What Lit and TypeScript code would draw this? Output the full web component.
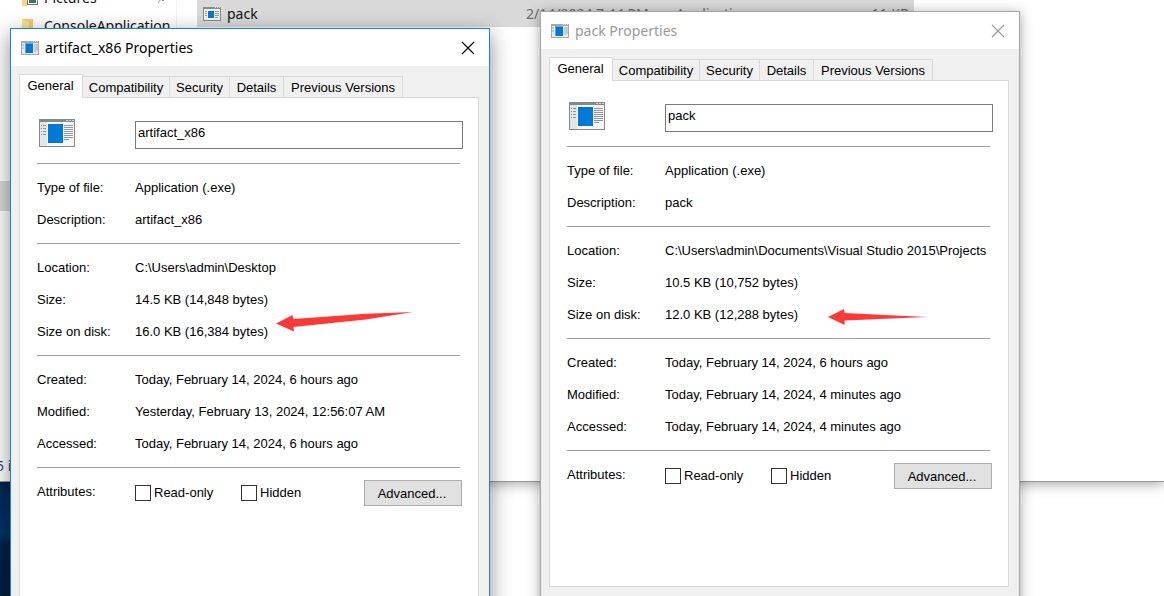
import { LitElement, html, css, svg } from "lit";
import { customElement, property } from "lit/decorators.js";

interface Row { label: string; value: string; }
interface FileInfo { name: string; groups: Row[][]; }

const leftFile: FileInfo = {
  name: "artifact_x86",
  groups: [
    [{ label: "Type of file:", value: "Application (.exe)" }, { label: "Description:", value: "artifact_x86" }],
    [{ label: "Location:", value: "C:\\Users\\admin\\Desktop" }, { label: "Size:", value: "14.5 KB (14,848 bytes)" }, { label: "Size on disk:", value: "16.0 KB (16,384 bytes)" }],
    [{ label: "Created:", value: "Today, February 14, 2024, 6 hours ago" }, { label: "Modified:", value: "Yesterday, February 13, 2024, 12:56:07 AM" }, { label: "Accessed:", value: "Today, February 14, 2024, 6 hours ago" }],
  ],
};
const rightFile: FileInfo = {
  name: "pack",
  groups: [
    [{ label: "Type of file:", value: "Application (.exe)" }, { label: "Description:", value: "pack" }],
    [{ label: "Location:", value: "C:\\Users\\admin\\Documents\\Visual Studio 2015\\Projects" }, { label: "Size:", value: "10.5 KB (10,752 bytes)" }, { label: "Size on disk:", value: "12.0 KB (12,288 bytes)" }],
    [{ label: "Created:", value: "Today, February 14, 2024, 6 hours ago" }, { label: "Modified:", value: "Today, February 14, 2024, 4 minutes ago" }, { label: "Accessed:", value: "Today, February 14, 2024, 4 minutes ago" }],
  ],
};

const smallIcon = html`<svg width="18" height="14" viewBox="0 0 18 14" shape-rendering="crispEdges" aria-hidden="true">
  <rect width="18" height="14" fill="#a4a9ac"/><rect x="1" y="2" width="16" height="11" fill="#e6e8e9"/>
  <rect x="12" y="0" width="1" height="1" fill="#ddd"/><rect x="14" y="0" width="1" height="1" fill="#ddd"/><rect x="16" y="0" width="1" height="1" fill="#ddd"/>
  <rect x="1" y="3" width="2" height="2" fill="#c4c8ca"/><rect x="1" y="6" width="2" height="2" fill="#c4c8ca"/>
  <rect x="4" y="2" width="8" height="10" fill="#5aa6e6"/><rect x="5" y="3" width="7" height="9" fill="#0078d7"/><path d="M13 3h4v7h-2v1h-2z" fill="#c8c9cb"/></svg>`;

const listIcon = html`<svg width="18" height="14" viewBox="0 0 18 14" shape-rendering="crispEdges" aria-hidden="true">
  <rect width="18" height="14" fill="#868b8e"/><rect x="1" y="2" width="16" height="11" fill="#f3f3f3"/>
  <rect x="12" y="0" width="1" height="1" fill="#ddd"/><rect x="14" y="0" width="1" height="1" fill="#ddd"/><rect x="16" y="0" width="1" height="1" fill="#ddd"/>
  <path d="M2 4h2v1H2zM2 6h2v1H2zM2 8h2v1H2zM12 4h4v1h-4zM12 6h4v1h-4zM12 8h4v1h-4zM12 10h3v1h-3z" fill="#9a9da0"/>
  <rect x="5" y="4" width="6" height="7" fill="#0878d8"/></svg>`;

const largeIcon = html`<svg width="36" height="28" viewBox="0 0 36 28" shape-rendering="crispEdges" aria-hidden="true">
  <rect width="36" height="28" fill="#84888b"/><rect x="1" y="3" width="34" height="24" fill="#f7f7f7"/><rect x="1" y="3" width="7" height="24" fill="#e3e5e6"/>
  <path d="M27 1h2v1h-2zM30 1h2v1h-2zM33 1h2v1h-2z" fill="#d7dadb"/>
  ${[6, 9, 12, 15].map((y) => svg`<path d=${`M2 ${y}h1v1H2zM4 ${y}h3v1H4z`} fill="#8f9497"/>`)}
  <rect x="9" y="5" width="15" height="19" fill="#0078d7"/>
  ${[6, 8, 10, 12, 14, 16, 18].map((y) => svg`<rect x="25" y=${y} width="9" height="1" fill="#929699"/>`)}
  <rect x="25" y="20" width="5" height="1" fill="#929699"/></svg>`;

@customElement("properties-dialog")
export class PropertiesDialog extends LitElement {
  @property({ attribute: false }) file!: FileInfo;
  @property({ type: Boolean, reflect: true }) active = false;

  static styles = css`
    :host { display: block; box-sizing: border-box; width: 480px; background: #f0f0f0; border: 1px solid #a3a3a3; box-shadow: 0 2px 12px rgba(0,0,0,.36); color: #000; font: 13px/16px "Liberation Sans", sans-serif; padding-bottom: 48px; }
    :host([active]) { border-color: #1883d7; box-shadow: 0 6px 20px rgba(0,0,0,.45); }
    * { box-sizing: border-box; }
    svg { display: block; flex: none; }
    .title { display: flex; align-items: center; gap: 6px; height: 37px; padding: 0 14px 0 10px; background: #fff; color: #999; }
    :host([active]) .title { color: #000; }
    h2 { flex: 1; margin: 0; font: 14px/20px "Noto Sans", sans-serif; }
    button { font: inherit; color: inherit; }
    .close { border: 0; padding: 0; background: none; }
    .tabs { display: flex; align-items: flex-end; padding: 8px 8px 0; }
    .tab { height: 21px; padding: 2px 3px 0; border: 1px solid #d9d9d9; border-width: 1px 1px 0 0; background: #f0f0f0; white-space: nowrap; text-align: center; }
    .tab.compat { width: 87px; } .tab.security { width: 60px; } .tab.details { width: 54px; } .tab.versions { width: 119px; }
    .tab.general { width: 64px; height: 24px; margin-bottom: -1px; padding: 0 4px 2px 3px; border-left-width: 1px; background: #fff; position: relative; }
    .panel { margin: 0 10px 0 8px; min-height: 507px; padding: 21px 15px 0 17px; border: 1px solid #d9d9d9; background: #fff; }
    .head { display: flex; align-items: flex-start; padding: 0 0 14px 2px; }
    .head input { flex: 1; min-width: 0; height: 28px; margin: 2px 0 0 60px; padding: 0 2px 5px; border: 1px solid #7a7a7a; border-radius: 0; background: #fff; font: inherit; color: inherit; outline: 0; }
    hr { height: 1px; margin: 0 3px 0 0; border: 0; background: #a0a0a0; }
    dl { margin: 0; padding: 8px 0 7px; }
    .row { display: flex; align-items: center; height: 32px; }
    dt { width: 98px; flex: none; }
    dd { flex: 1; min-width: 0; margin: 0; overflow: hidden; white-space: nowrap; }
    .attributes { display: flex; align-items: flex-start; padding: 12px 1px 0 0; }
    .caption { width: 98px; padding-top: 4px; }
    .check { display: flex; align-items: center; gap: 3px; width: 106px; height: 26px; }
    .check input { appearance: none; width: 16px; height: 16px; margin: 0; border: 1px solid #333; background: #fff; }
    .advanced { width: 98px; height: 26px; margin-left: auto; padding: 2px 2px 0 0; border: 1px solid #adadad; background: #e1e1e1; }
  `;

  render() {
    return html`
      <header class="title">${smallIcon}<h2>${this.file.name} Properties</h2>
        <button class="close" aria-label="Close"><svg width="14" height="14" viewBox="0 0 14 14"><path d="M1 1l12 12M13 1L1 13" stroke="currentColor" stroke-width="1.1"/></svg></button>
      </header>
      <div class="tabs" role="tablist">
        <button class="tab general" role="tab" aria-selected="true">General</button>
        <button class="tab compat" role="tab">Compatibility</button>
        <button class="tab security" role="tab">Security</button>
        <button class="tab details" role="tab">Details</button>
        <button class="tab versions" role="tab">Previous Versions</button>
      </div>
      <div class="panel" role="tabpanel">
        <div class="head">${largeIcon}<input type="text" aria-label="File name" .value=${this.file.name} /></div>
        ${this.file.groups.map((g) => html`<hr /><dl>${g.map((r) => html`<div class="row"><dt>${r.label}</dt><dd>${r.value}</dd></div>`)}</dl>`)}
        <hr />
        <div class="attributes"><span class="caption">Attributes:</span>
          <label class="check"><input type="checkbox" />Read-only</label>
          <label class="check"><input type="checkbox" />Hidden</label>
          <button class="advanced">Advanced...</button>
        </div>
      </div>`;
  }
}

@customElement("app-root")
export class AppRoot extends LitElement {
  static styles = css`
    :host { display: block; position: relative; height: 100vh; overflow: hidden; background: #fff; font: 14px/20px "Noto Sans", sans-serif; color: #111; }
    * { box-sizing: border-box; }
    svg { display: block; flex: none; }
    .explorer { display: flex; flex-direction: column; height: 482px; border-bottom: 1px solid #999; background: #fff; box-shadow: 0 2px 12px rgba(0,0,0,.36); position: relative; }
    .columns { display: flex; flex: 1; min-height: 0; overflow: hidden; }
    .nav { display: flex; flex-direction: column; width: 177px; border-right: 1px solid #f3f3f3; }
    .item { display: flex; align-items: center; gap: 5px; height: 28px; padding-left: 21px; flex: none; }
    .item:first-child { margin-top: -16px; }
    .item .pin { margin-left: auto; margin-right: 9px; }
    .selected { height: 30px; margin-top: 141px; background: #d9d9d9; }
    .files { flex: 1; padding-left: 20px; }
    .file { display: grid; grid-template-columns: 323px 150px 1fr 80px; width: 717px; height: 27px; padding: 0 5px 0 6px; align-items: center; background: #d9d9d9; color: #6d6d6d; }
    .name { display: flex; align-items: center; gap: 6px; color: #111; }
    .size { text-align: right; }
    .status { height: 30px; line-height: 30px; color: #26456e; text-indent: -4px; }
    .wallpaper { width: 10px; height: 114px; background: linear-gradient(#002a55, #003468 45%, #002248 55%, #001f42); }
    .left, .right { position: absolute; }
    .left { left: 10px; top: 28px; }
    .right { left: 540px; top: 11px; }
    .arrow { position: absolute; }
    .first { left: 276px; top: 311px; }
    .second { left: 828px; top: 308px; }
  `;

  render() {
    return html`
      <section class="explorer">
        <div class="columns">
          <nav class="nav">
            <div class="item"><svg width="18" height="18" viewBox="0 0 18 18"><path d="M1 2h6v15H1z" fill="#f7d681"/><rect x="6.500" y="4.500" width="10" height="11" fill="#fff" stroke="#777"/><path d="M8 14V9l3-3 4 4v4z" fill="#3c6f7b"/></svg><span>Pictures</span>
              <svg class="pin" width="10" height="12" viewBox="0 0 10 12"><path d="M1 11l3-4M2 5l5 4M5 1l4 4-3 4-4-4z" fill="none" stroke="#8a949c"/></svg></div>
            <div class="item"><svg width="18" height="18" viewBox="0 0 18 18"><path d="M1 2h11v15H1z" fill="#f3cc6a"/><path d="M1 2l7 3v13l-7-2z" fill="#fbe095"/></svg><span>ConsoleApplication</span></div>
            <div class="selected"></div>
          </nav>
          <div class="files">
            <div class="file"><span class="name">${listIcon}pack</span><span>2/14/2024 7:44 PM</span><span>Application</span><span class="size">11 KB</span></div>
          </div>
        </div>
        <div class="status">5 items</div>
      </section>
      <div class="wallpaper"></div>
      <properties-dialog class="left" active .file=${leftFile}></properties-dialog>
      <properties-dialog class="right" .file=${rightFile}></properties-dialog>
      <svg class="arrow first" width="138" height="22" viewBox="0 0 138 22" aria-hidden="true"><path d="M0 12.5L16.5 4l.8 4L90 2.800 137 1 90 8.500 17.500 16l.5 4.500z" fill="#fb3a38"/></svg>
      <svg class="arrow second" width="100" height="18" viewBox="0 0 100 18" aria-hidden="true"><path d="M0 9L16 1l.5 4L99 9 16.500 12.500l.2 4.500z" fill="#fb3a38"/></svg>`;
  }
}
